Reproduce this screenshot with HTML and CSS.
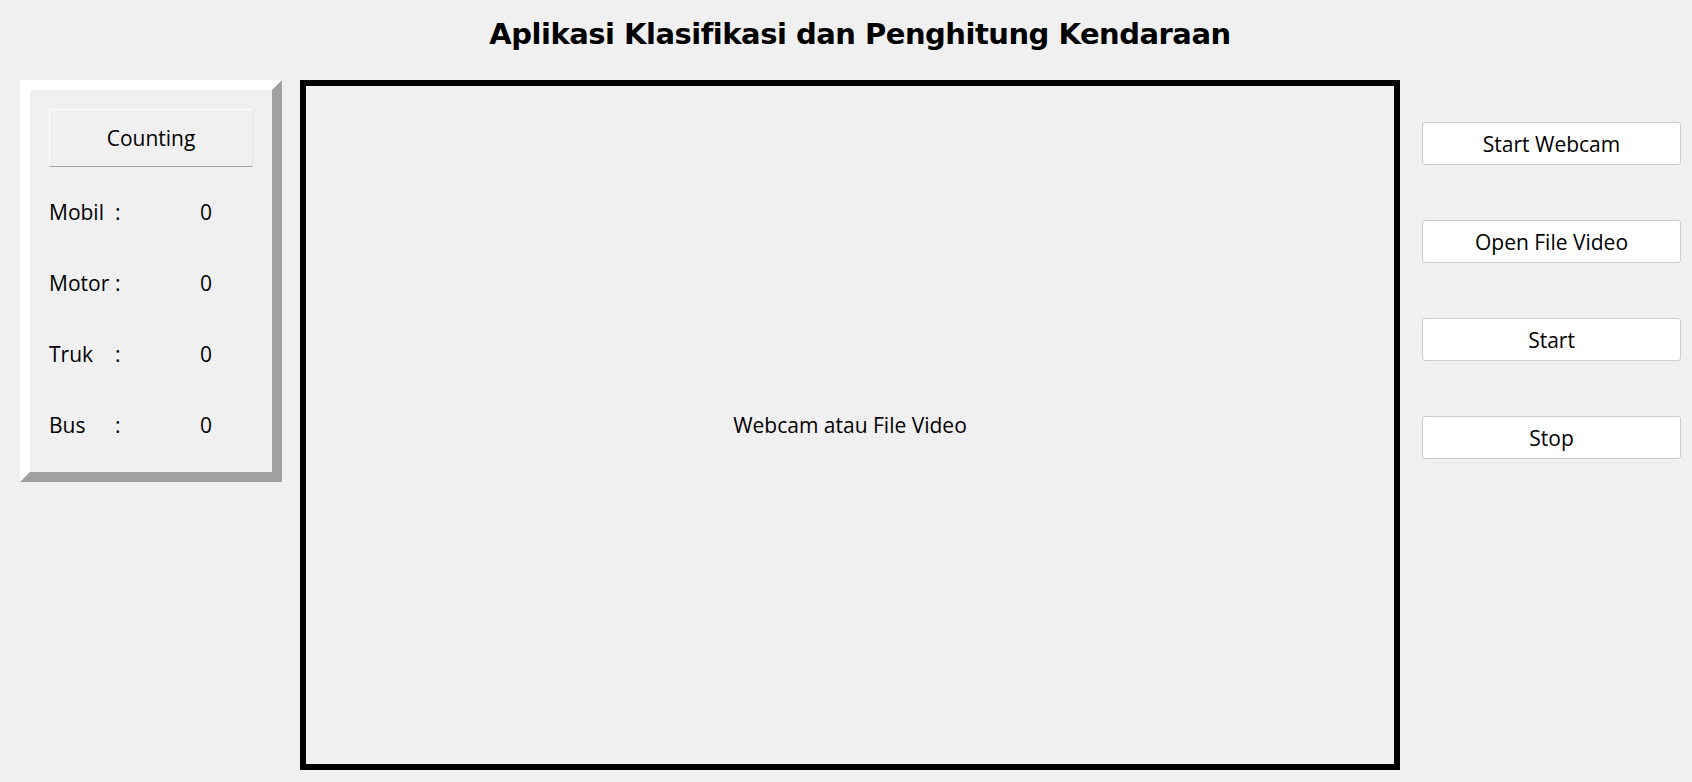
FILE: index.html
```html
<!DOCTYPE html>
<html lang="id">
<head>
<meta charset="utf-8">
<title>Aplikasi Klasifikasi dan Penghitung Kendaraan</title>
<link rel="stylesheet" href="styles.css">
</head>
<body>
<header class="title-bar">
  <h1 class="title">Aplikasi Klasifikasi dan Penghitung Kendaraan</h1>
</header>
<main class="main">
  <section class="panel">
    <div class="panel-inner">
      <div class="counting">Counting</div>
      <div class="rows">
        <div class="row"><span class="name">Mobil</span><span class="colon">:</span><span class="value">0</span></div>
        <div class="row"><span class="name">Motor</span><span class="colon">:</span><span class="value">0</span></div>
        <div class="row"><span class="name">Truk</span><span class="colon">:</span><span class="value">0</span></div>
        <div class="row"><span class="name">Bus</span><span class="colon">:</span><span class="value">0</span></div>
      </div>
    </div>
  </section>
  <section class="video">
    <span class="video-label">Webcam atau File Video</span>
  </section>
  <nav class="controls">
    <button class="btn">Start Webcam</button>
    <button class="btn">Open File Video</button>
    <button class="btn">Start</button>
    <button class="btn">Stop</button>
  </nav>
</main>
</body>
</html>
```
FILE: styles.css
```css
html, body {
  margin: 0;
  padding: 0;
}
body {
  background: #f0f0f0;
  width: 1692px;
  height: 782px;
  overflow: hidden;
  font-family: "Open Sans", "Noto Sans", sans-serif;
  font-size: 21px;
  color: #000;
}
.title-bar {
  height: 80px;
  display: flex;
  justify-content: center;
  padding-left: 28px;
  box-sizing: border-box;
}
.title {
  margin: 0;
  padding-top: 14px;
  font-family: "DejaVu Sans", sans-serif;
  font-weight: bold;
  font-size: 29px;
  line-height: 40px;
  letter-spacing: -0.5px;
}
.main {
  display: flex;
  align-items: flex-start;
  padding-left: 20px;
}
.panel {
  width: 262px;
  height: 402px;
  box-sizing: border-box;
  border-style: solid;
  border-width: 10px;
  border-color: #ffffff #a0a0a0 #a0a0a0 #ffffff;
  background: #f0f0f0;
}
.panel-inner {
  padding: 19px 0 0 19px;
}
.counting {
  width: 204px;
  height: 58px;
  box-sizing: border-box;
  border-style: solid;
  border-width: 1px;
  border-color: #ffffff #e6e6e6 #a0a0a0 #ffffff;
  display: flex;
  align-items: center;
  justify-content: center;
}
.rows {
  display: flex;
  flex-direction: column;
  padding-top: 31px;
  gap: 43px;
}
.row {
  display: flex;
  align-items: center;
  width: 171px;
  height: 28px;
}
.name {
  min-width: 62px;
  padding-right: 4px;
}
.colon {
  flex: 1;
}
.value {
  width: 20px;
}
.video {
  margin-left: 18px;
  width: 1100px;
  height: 690px;
  box-sizing: border-box;
  border: 6px solid #000;
  display: flex;
  align-items: center;
  justify-content: center;
}
.video-label {
  line-height: 26px;
}
.controls {
  margin-left: 22px;
  padding-top: 42px;
  display: flex;
  flex-direction: column;
  gap: 55px;
}
.btn {
  width: 259px;
  height: 43px;
  box-sizing: border-box;
  background: #ffffff;
  border: 1px solid #cccccc;
  border-radius: 3px;
  font-family: "Open Sans", "Noto Sans", sans-serif;
  font-size: 21px;
  color: #000;
  padding: 0;
}
```
